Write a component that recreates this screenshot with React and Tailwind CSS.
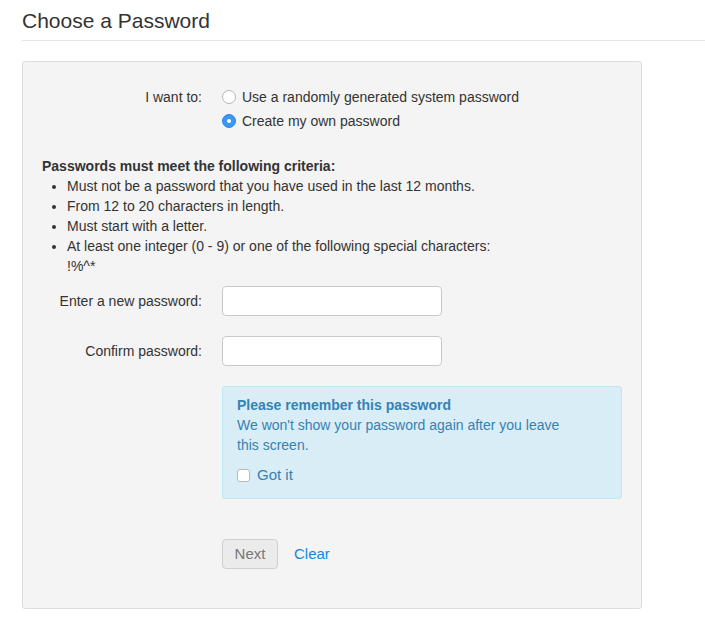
import React, { useState } from 'react';

function Radio({ checked, label, onClick }) {
  return (
    <label className="flex items-center h-5 cursor-pointer" onClick={onClick}>
      {checked ? (
        <span className="w-[14px] h-[14px] rounded-full bg-[#3a97f6] border border-[#2f86e4] flex items-center justify-center">
          <span className="w-[4px] h-[4px] rounded-full bg-white" />
        </span>
      ) : (
        <span className="w-[14px] h-[14px] rounded-full bg-white border border-[#b5b5b5]" />
      )}
      <span className="ml-[6px]">{label}</span>
    </label>
  );
}

export default function App() {
  const [mode, setMode] = useState('own');
  const [gotIt, setGotIt] = useState(false);

  return (
    <div className="min-h-[629px] bg-white pl-[22px] text-[14px] leading-5 text-[#333]" style={{ fontFamily: '"Liberation Sans", Arial, sans-serif' }}>
      <h1 className="pt-[7px] h-[41px] text-[21px] leading-[28px] text-[#333] border-b border-[#e5e5e5]">
        Choose a Password
      </h1>

      <div className="mt-[20px] w-[620px] bg-[#f4f4f4] border border-[#dcdcdc] rounded-[3px] pl-[19px] pr-[19px] pt-[25px] pb-[39px]">
        <div className="grid grid-cols-[160px_1fr] gap-x-[20px]">
          <div className="text-right">I want to:</div>
          <div className="flex flex-col gap-[4px]">
            <Radio checked={mode === 'random'} label="Use a randomly generated system password" onClick={() => setMode('random')} />
            <Radio checked={mode === 'own'} label="Create my own password" onClick={() => setMode('own')} />
          </div>
        </div>

        <div className="mt-[25px] font-bold">Passwords must meet the following criteria:</div>
        <ul className="w-[455px] pl-[25px] list-disc">
          <li>Must not be a password that you have used in the last 12 months.</li>
          <li>From 12 to 20 characters in length.</li>
          <li>Must start with a letter.</li>
          <li>At least one integer (0 - 9) or one of the following special characters: !%^*</li>
        </ul>

        <div className="mt-[10px] grid grid-cols-[160px_220px] gap-x-[20px] gap-y-[20px] items-center">
          <div className="text-right">Enter a new password:</div>
          <input type="password" className="h-[30px] bg-white border border-[#c9c9c9] rounded-[4px] px-2 outline-none" />
          <div className="text-right">Confirm password:</div>
          <input type="password" className="h-[30px] bg-white border border-[#c9c9c9] rounded-[4px] px-2 outline-none" />
        </div>

        <div className="mt-[20px] ml-[180px] h-[113px] bg-[#d9edf7] border border-[#bce8f1] rounded-[3px] pl-[14px] pt-[8px] text-[#3582b3]">
          <div className="font-bold">Please remember this password</div>
          <p className="max-w-[340px]">We won't show your password again after you leave this screen.</p>
          <label className="mt-[10px] flex items-center h-5 cursor-pointer">
            <input
              type="checkbox"
              checked={gotIt}
              onChange={() => setGotIt(!gotIt)}
              className="appearance-none w-[13px] h-[13px] bg-white border border-[#b8b8b8] rounded-[3px] checked:bg-[#3a97f6]"
            />
            <span className="ml-[7px] text-[15px]">Got it</span>
          </label>
        </div>

        <div className="mt-[40px] ml-[180px] flex items-center">
          <button className="h-[30px] w-[56px] bg-[#ebebeb] border border-[#cfcfcf] rounded-[4px] text-[15px] text-[#777]">
            Next
          </button>
          <a href="#" className="ml-[16px] text-[15px] text-[#1a86d6]">Clear</a>
        </div>
      </div>
    </div>
  );
}
